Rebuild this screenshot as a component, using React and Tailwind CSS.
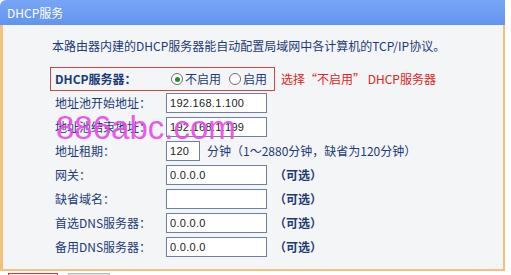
const FONT = { fontFamily: '"Noto Sans CJK SC", "Liberation Sans", sans-serif' };

const rows = [
  { label: '地址池开始地址：', value: '192.168.1.100' },
  { label: '地址池结束地址：', value: '192.168.1.199' },
  { label: '地址租期：', value: '120', short: true, note: '分钟（1～2880分钟，缺省为120分钟）' },
  { label: '网关：', value: '0.0.0.0', opt: true },
  { label: '缺省域名：', value: '', opt: true },
  { label: '首选DNS服务器：', value: '0.0.0.0', opt: true },
  { label: '备用DNS服务器：', value: '0.0.0.0', opt: true },
];

const Radio = ({ checked, label }) => (
  <label className="flex items-center gap-[2px]">
    <span className="w-[12px] h-[12px] rounded-full border border-[#6b6b6b] bg-white flex items-center justify-center">
      {checked && <span className="w-[5px] h-[5px] rounded-full bg-[#2a8a2a]"></span>}
    </span>
    <span>{label}</span>
  </label>
);

const App = () => {
  return (
    <div className="w-[511px] h-[275px] bg-white relative overflow-hidden text-[12px]" style={FONT}>
      <div className="w-[505px]">
        <div className="h-[25px] rounded-tl-[6px] bg-gradient-to-b from-[#78a6f6] to-[#6294ee] text-white pl-[7px] flex items-center">
          DHCP服务
        </div>
        <div className="h-[246px] bg-[#f4f5f6] border-l-[3px] border-r-[2px] border-b-[2px] border-[#f5c07c]">
          <p className="pt-[13px] pl-[49px] leading-[16px] text-[#1c3a78]">
            本路由器内建的DHCP服务器能自动配置局域网中各计算机的TCP/IP协议。
          </p>
          <div className="mt-[13px]">
            <div className="flex items-center">
              <div className="ml-[47px] w-[225px] h-[24px] border border-[#c84848] flex items-center text-[#1c3a78]">
                <span className="pl-[4px] w-[120px] font-bold">DHCP服务器：</span>
                <div className="flex items-center gap-[8px]">
                  <Radio checked label="不启用" />
                  <Radio label="启用" />
                </div>
              </div>
              <span className="ml-[6px] text-[#e02424]">选择“不启用” DHCP服务器</span>
            </div>
            {rows.map((r) => (
              <div key={r.label} className="h-[24px] flex items-center text-[#1c3a78]">
                <span className="pl-[52px] w-[163px]">{r.label}</span>
                <div
                  className={`${r.short ? 'w-[34px]' : 'w-[101px]'} h-[20px] border border-[#6d7fa6] bg-white flex items-center pl-[3px] text-[11px] text-[#222] tracking-[0.3px]`}
                  style={{ fontFamily: '"Liberation Sans", sans-serif' }}
                >
                  {r.value}
                </div>
                {r.note && <span className="ml-[7px]">{r.note}</span>}
                {r.opt && <span className="ml-[7px] font-bold">（可选）</span>}
              </div>
            ))}
          </div>
        </div>
        <div className="flex pt-[2px] pl-[8px] gap-[10px]">
          <div className="w-[50px] h-[20px] border border-[#d23a3a] bg-[#efefef]"></div>
          <div className="w-[42px] h-[20px] border border-[#b8b8b8] bg-[#e4e4e4]"></div>
        </div>
      </div>
      <div
        className="absolute left-[56px] top-[108px] text-[33px] leading-[40px] text-[#e64ce6] opacity-90 pointer-events-none"
        style={{ fontFamily: '"Liberation Sans", sans-serif' }}
      >
        886abc.com
      </div>
    </div>
  );
};

export default App;
